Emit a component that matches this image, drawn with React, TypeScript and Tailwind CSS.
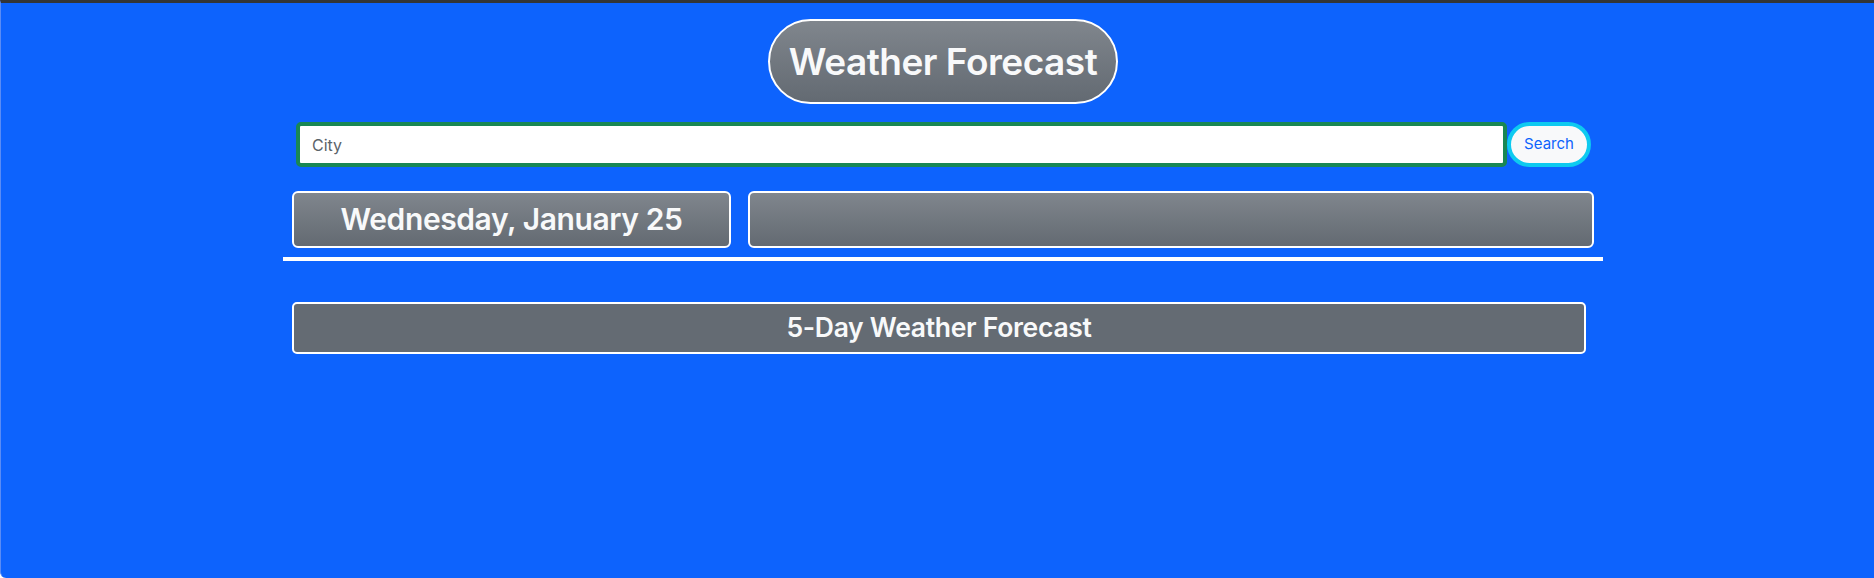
import React from "react";

export default function App() {
  const font = { fontFamily: "Inter, 'Liberation Sans', sans-serif" };
  return (
    <div
      className="w-[1874px] h-[578px] bg-[#0d63fd] border-t-[3px] border-t-[#333536] border-l border-l-[#5a8cf5] overflow-hidden rounded-bl-[6px]"
      style={font}
    >
      <div className="ml-[282px] w-[1320px] flex flex-col">
        <div className="flex justify-center mt-[16px]">
          <div className="h-[85px] px-[19px] flex items-center rounded-full border-2 border-white bg-gradient-to-b from-[#80868d] to-[#636a72]">
            <span className="text-[37px] font-semibold text-[#f8f9fa] tracking-[-0.5px]">Weather Forecast</span>
          </div>
        </div>

        <div className="flex mt-[18px] ml-[13px]">
          <div className="w-[1211px] h-[45px] rounded-[5px] border-[4px] border-[#198754] bg-white flex items-center pl-[12px]">
            <span className="text-[16px] text-[#5c636a]">City</span>
          </div>
          <div className="w-[84px] h-[45px] rounded-full border-[4px] border-[#0dcaf0] bg-[#f8f9fa] flex items-center justify-center">
            <span className="text-[15px] text-[#0d63fd]">Search</span>
          </div>
        </div>

        <div className="flex mt-[24px] ml-[9px] gap-[17px]">
          <div className="w-[439px] h-[57px] rounded-[6px] border-2 border-white bg-gradient-to-b from-[#80868d] to-[#636a72] flex items-center justify-center">
            <span className="text-[30px] font-semibold text-[#f8f9fa] tracking-[-0.4px]">Wednesday, January 25</span>
          </div>
          <div className="w-[846px] h-[57px] rounded-[6px] border-2 border-white bg-gradient-to-b from-[#80868d] to-[#636a72]" />
        </div>

        <div className="h-[4px] bg-white mt-[9px]" />

        <div className="ml-[9px] mt-[41px] w-[1294px] h-[52px] rounded-[5px] border-2 border-white bg-[#646b73] flex items-center justify-center">
          <span className="text-[26.5px] font-semibold text-[#f8f9fa] tracking-[-0.3px]">5-Day Weather Forecast</span>
        </div>
      </div>
    </div>
  );
}
